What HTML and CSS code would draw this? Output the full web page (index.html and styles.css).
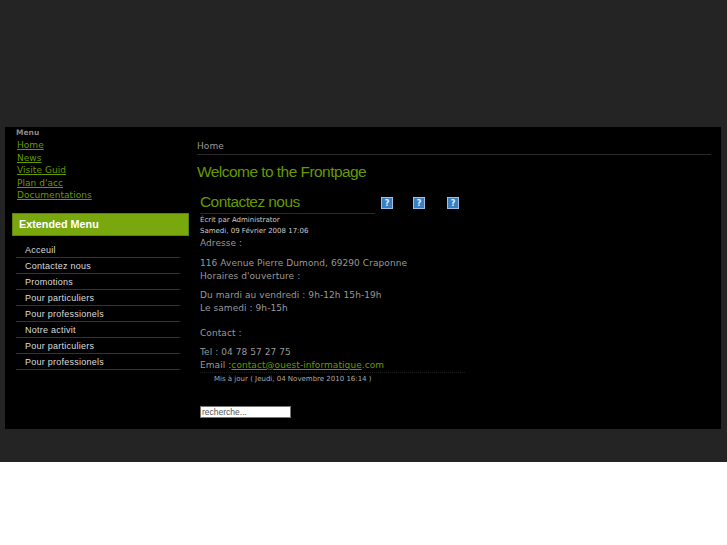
FILE: index.html
```html
<!DOCTYPE html>
<html lang="fr">
<head>
<meta charset="utf-8">
<title>Contactez nous</title>
<link rel="stylesheet" href="styles.css">
</head>
<body>
<div class="page">
  <div class="main">
    <aside class="side">
      <div class="menu-title">Menu</div>
      <ul class="links">
        <li><a href="#">Home</a></li>
        <li><a href="#">News</a></li>
        <li><a href="#">Visite Guid</a></li>
        <li><a href="#">Plan d'acc</a></li>
        <li><a href="#">Documentations</a></li>
      </ul>
      <div class="ext-title">Extended Menu</div>
      <ul class="ext">
        <li>Acceuil</li>
        <li>Contactez nous</li>
        <li>Promotions</li>
        <li>Pour particuliers</li>
        <li>Pour professionels</li>
        <li>Notre activit</li>
        <li>Pour particuliers</li>
        <li>Pour professionels</li>
      </ul>
    </aside>
    <main class="content">
      <div class="crumb">Home</div>
      <h1 class="front">Welcome to the Frontpage</h1>
      <article class="article">
        <div class="head">
          <h2 class="title">Contactez nous</h2>
          <div class="icons">
            <svg class="ico" viewBox="0 0 12 12"><rect x=".5" y=".5" width="11" height="11" fill="#3a7fc4" stroke="#9dbfe0"/><text x="6" y="9" text-anchor="middle" class="q">?</text></svg>
            <svg class="ico" viewBox="0 0 12 12"><rect x=".5" y=".5" width="11" height="11" fill="#3a7fc4" stroke="#9dbfe0"/><text x="6" y="9" text-anchor="middle" class="q">?</text></svg>
            <svg class="ico" viewBox="0 0 12 12"><rect x=".5" y=".5" width="11" height="11" fill="#3a7fc4" stroke="#9dbfe0"/><text x="6" y="9" text-anchor="middle" class="q">?</text></svg>
          </div>
        </div>
        <div class="metas">
          <div class="meta">Écrit par Administrator</div>
          <div class="meta">Samedi, 09 Février 2008 17:06</div>
        </div>
        <div class="body">
          <p class="p1">Adresse :</p>
          <p>116 Avenue Pierre Dumond, 69290 Craponne<br>Horaires d'ouverture :</p>
          <p>Du mardi au vendredi : 9h-12h 15h-19h<br>Le samedi : 9h-15h<br><br>Contact :</p>
          <p>Tel : 04 78 57 27 75<br>Email :<a href="#">contact@ouest-informatique</a><span class="green">.com</span></p>
        </div>
        <div class="updated">Mis à jour ( Jeudi, 04 Novembre 2010 16:14 )</div>
      </article>
      <input class="search" type="text" value="recherche...">
    </main>
  </div>
</div>
</body>
</html>
```

FILE: styles.css
```css
html, body {
  margin: 0;
  padding: 0;
  background: #fff;
}
.page {
  box-sizing: border-box;
  height: 462px;
  padding: 127px 6px 33px 5px;
  background: #242424;
  font-family: "DejaVu Sans", sans-serif;
  font-size: 9px;
}
.main {
  display: flex;
  height: 302px;
  background: #000;
}
.side {
  width: 177px;
  padding-left: 7px;
  flex: none;
}
.menu-title {
  height: 12px;
  margin-left: 4px;
  font-size: 7.5px;
  line-height: 12px;
  font-weight: bold;
  color: #888;
}
.links {
  list-style: none;
  margin: 0 0 11px 5px;
  padding: 0;
}
.links li {
  height: 12.5px;
  line-height: 13px;
}
.links a, .body a {
  color: #669900;
  text-decoration: underline;
}
.links a {
  letter-spacing: .05px;
}
.ext-title {
  box-sizing: border-box;
  height: 23px;
  padding-left: 6px;
  background: #78a70e;
  border: 1px solid #5d850a;
  color: #fff;
  font-family: "Liberation Sans", sans-serif;
  font-size: 10.8px;
  line-height: 20px;
  font-weight: bold;
}
.ext {
  list-style: none;
  margin: 6px 9px 0 4px;
  padding: 0;
  font-family: "Liberation Sans", sans-serif;
  font-size: 9px;
  letter-spacing: .25px;
  color: #ddd;
}
.ext li {
  box-sizing: border-box;
  height: 16px;
  padding-left: 9px;
  line-height: 16px;
  border-bottom: 1px solid #333;
}
.content {
  flex: 1;
  padding: 13px 10px 0 8px;
}
.crumb {
  height: 14px;
  border-bottom: 1px solid #2a2a2a;
  color: #999;
  font-size: 9px;
  line-height: 12px;
  letter-spacing: .1px;
}
.front {
  margin: 8px 0 0;
  height: 30px;
  color: #669900;
  font-family: "Liberation Sans", sans-serif;
  font-size: 15.5px;
  letter-spacing: -.55px;
  line-height: 18px;
  font-weight: normal;
}
.article {
  padding-left: 3px;
  width: 270px;
}
.head {
  display: flex;
  width: 500px;
  align-items: center;
}
.title {
  box-sizing: border-box;
  width: 175px;
  height: 21px;
  margin: 0;
  border-bottom: 1px solid #2a2a2a;
  color: #669900;
  font-family: "Liberation Sans", sans-serif;
  font-size: 15.5px;
  letter-spacing: -.58px;
  line-height: 18px;
  font-weight: normal;
}
.icons {
  display: flex;
  gap: 20px;
  margin: -2px 0 0 6px;
}
.ico {
  width: 12px;
  height: 12px;
  display: block;
}
.ico:last-child {
  margin-left: 2px;
}
.q {
  font-family: "DejaVu Sans", sans-serif;
  font-size: 8px;
  font-weight: bold;
  fill: #e8f2fb;
}
.metas {
  padding-top: 1px;
}
.meta {
  height: 11px;
  font-size: 7px;
  line-height: 11px;
  color: #ccc;
}
.body {
  width: 290px;
  color: #999;
  font-size: 9px;
  line-height: 12.5px;
  letter-spacing: .07px;
}
.body p {
  margin: 0 0 7px;
}
.body .p1 {
  margin: -.5px 0 8px;
}
.green {
  color: #669900;
}
.updated {
  width: 251px;
  height: 12px;
  margin-top: -6.5px;
  padding-left: 14px;
  border-top: 1px dotted #1c1c1c;
  color: #aaa;
  font-size: 7px;
  line-height: 13px;
}
.search {
  display: block;
  box-sizing: border-box;
  width: 91px;
  height: 12px;
  margin: 21px 0 0 3px;
  padding: 0 1px;
  border: 1px solid #777;
  background: #fff;
  color: #555;
  font-family: "Liberation Sans", sans-serif;
  font-size: 8.5px;
  outline: none;
}
```
